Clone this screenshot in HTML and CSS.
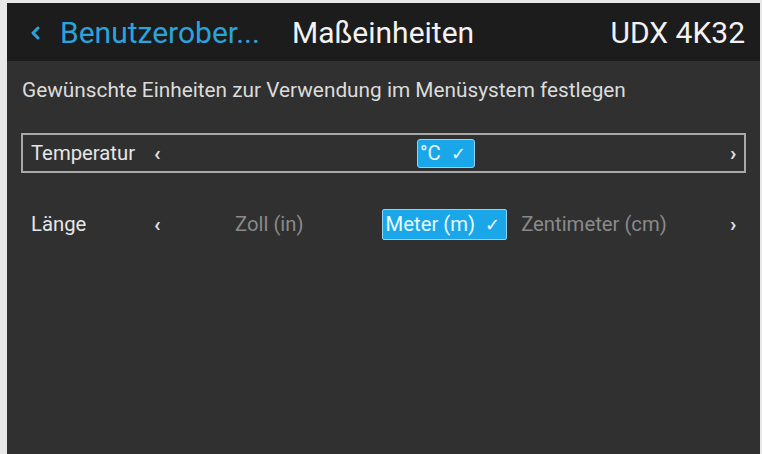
FILE: index.html
```html
<!DOCTYPE html>
<html lang="de">
<head>
<meta charset="utf-8">
<link rel="stylesheet" href="styles.css">
</head>
<body>
<div class="screen">
  <header class="header">
    <div class="back">
      <svg class="chev" width="12" height="14" viewBox="0 0 12 14"><polyline points="8,2 3,7 8,12" fill="none" stroke="#2ba3dc" stroke-width="3" stroke-linecap="round" stroke-linejoin="round"/></svg>
      <span class="back-text">Benutzerober...</span>
    </div>
    <div class="title">Maßeinheiten</div>
    <div class="device">UDX 4K32</div>
  </header>
  <main class="content">
    <p class="desc">Gewünschte Einheiten zur Verwendung im Menüsystem festlegen</p>
    <div class="row row-focus">
      <span class="label">Temperatur</span>
      <span class="arrow">‹</span>
      <div class="options options-temp">
        <span class="chip chip-c">°C <span class="check">✓</span></span>
      </div>
      <span class="arrow">›</span>
    </div>
    <div class="row row-len">
      <span class="label">Länge</span>
      <span class="arrow">‹</span>
      <div class="options options-len">
        <span class="opt opt-zoll">Zoll (in)</span>
        <span class="chip chip-m">Meter (m) <span class="check">✓</span></span>
        <span class="opt">Zentimeter (cm)</span>
      </div>
      <span class="arrow">›</span>
    </div>
  </main>
</div>
</body>
</html>
```

FILE: styles.css
```css
html, body {
  margin: 0;
  padding: 0;
  height: 100%;
}
body {
  background: #e8e8e8;
  font-family: Roboto, "Liberation Sans", sans-serif;
  padding: 3px 2px 0 7px;
  box-sizing: border-box;
  overflow: hidden;
}
.screen {
  height: 100%;
  background: #303030;
  display: flex;
  flex-direction: column;
}
.header {
  height: 58px;
  flex: none;
  background: #1c1c1c;
  display: flex;
  align-items: center;
  padding: 0 15px 0 23px;
  font-size: 30px;
  color: #f2f2f2;
}
.back {
  display: flex;
  align-items: center;
  color: #2ba3dc;
  width: 262px;
}
.chev {
  margin-right: 18px;
  position: relative;
  top: 1px;
}
.title {
  flex: 1;
}
.content {
  padding: 0 14px 0 14px;
}
.desc {
  margin: 17px 0 0 1px;
  font-size: 20.8px;
  line-height: 25px;
  color: #dcdcdc;
}
.row {
  display: flex;
  align-items: center;
  height: 40px;
  font-size: 20.3px;
  color: #e6e6e6;
  padding: 0 7px 0 8px;
  box-sizing: border-box;
  border: 2px solid transparent;
}
.row-focus {
  margin-top: 30px;
  border-color: #a8a8a8;
}
.row-len {
  margin-top: 31px;
}
.label {
  width: 123px;
}
.arrow {
  font-size: 21px;
  font-weight: 700;
  color: #e0e0e0;
  width: 7px;
}
.options {
  flex: 1;
  display: flex;
  align-items: center;
}
.options-temp {
  padding-left: 256px;
}
.options-len {
  padding-left: 74px;
}
.chip {
  background: #1aa7ea;
  color: #eaf7ff;
  border: 1px solid #8fd3f5;
  border-radius: 2px;
  line-height: 26px;
}
.chip-c {
  padding: 0 8px 0 2px;
  border-radius: 3px;
}
.chip-m {
  padding: 1px 6px 1px 3px;
  margin-right: 14px;
}
.check {
  font-size: 18px;
  margin-left: 5px;
}
.opt {
  color: #8a8a8a;
}
.opt-zoll {
  margin-right: 78px;
}
```
